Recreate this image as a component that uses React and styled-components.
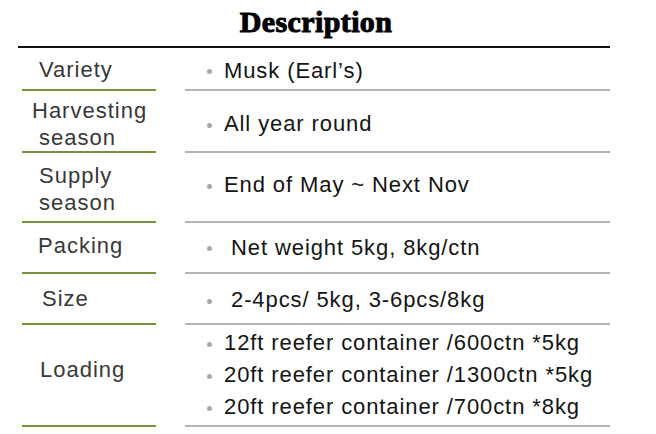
import React from "react";
import styled, { createGlobalStyle } from "styled-components";

const Global = createGlobalStyle`
  html, body { margin: 0; padding: 0; background: #fff; }
  body { width: 656px; height: 434px; overflow: hidden; }
`;

const Page = styled.div`
  width: 592px;
  padding: 7px 0 0 18px;
`;

const Title = styled.h1`
  margin: 0 0 9px 0;
  padding-left: 4px;
  height: 30px;
  line-height: 30px;
  font-family: "Liberation Serif", "Times New Roman", serif;
  font-weight: 700;
  font-size: 30px;
  letter-spacing: 0.4px;
  -webkit-text-stroke: 1px #000;
  color: #000;
  text-align: center;
`;

const Table = styled.div`
  border-top: 2px solid #111;
  display: flex;
  flex-direction: column;
`;

const Row = styled.div`
  display: grid;
  grid-template-columns: 134px 425px;
  column-gap: 29px;
  padding-left: 4px;
  height: ${(p) => p.$h}px;
`;

const Cell = styled.div`
  display: flex;
  flex-direction: column;
  justify-content: center;
  box-sizing: border-box;
  padding-top: ${(p) => Math.max(0, 2 * (p.$shift || 0))}px;
  padding-bottom: ${(p) => Math.max(0, -2 * (p.$shift || 0))}px;
`;

const LabelCell = styled(Cell)`
  border-bottom: 2px solid #76923c;
  padding-left: ${(p) => p.$indent ?? 17}px;
  font-family: "Liberation Sans", Arial, sans-serif;
  font-size: 22px;
  line-height: 27px;
  letter-spacing: 1px;
  color: #383838;
  white-space: pre;
`;

const ValueCell = styled(Cell)`
  border-bottom: 2px solid #b4b4b4;
  padding-left: 22px;
  font-family: "Liberation Sans", Arial, sans-serif;
  font-size: 22px;
  line-height: 32px;
  letter-spacing: 0.9px;
  color: #141414;
`;

const Item = styled.div`
  white-space: pre;
`;

const Dot = styled.span`
  display: inline-block;
  width: 5px;
  height: 5px;
  border-radius: 50%;
  background: #a8a8a8;
  vertical-align: middle;
  margin-right: 12px;
`;

const rows = [
  { h: 43, label: "Variety", ls: 1, vs: 2, items: ["Musk (Earl\u2019s)"] },
  { h: 62, label: "Harvesting\n season", indent: 10, ls: 3, vs: 3, items: ["All year round"] },
  { h: 70, label: "Supply\nseason", ls: 2, vs: -2, items: ["End of May ~ Next Nov"] },
  { h: 51, label: "Packing", indent: 16, ls: -2, vs: 0, items: [" Net weight 5kg, 8kg/ctn"] },
  { h: 51, label: "Size", indent: 20, ls: 0, vs: 1.5, items: [" 2-4pcs/ 5kg, 3-6pcs/8kg"] },
  {
    h: 102,
    label: "Loading",
    indent: 18,
    ls: -6,
    vs: 0,
    items: [
      "12ft reefer container /600ctn *5kg",
      "20ft reefer container /1300ctn *5kg",
      "20ft reefer container /700ctn *8kg",
    ],
  },
];

export default function App() {
  return (
    <>
      <Global />
      <Page>
        <Title>Description</Title>
        <Table>
          {rows.map((r) => (
            <Row key={r.label} $h={r.h}>
              <LabelCell $indent={r.indent} $shift={r.ls}>
                {r.label}
              </LabelCell>
              <ValueCell $shift={r.vs}>
                {r.items.map((t) => (
                  <Item key={t}>
                    <Dot />
                    {t}
                  </Item>
                ))}
              </ValueCell>
            </Row>
          ))}
        </Table>
      </Page>
    </>
  );
}
